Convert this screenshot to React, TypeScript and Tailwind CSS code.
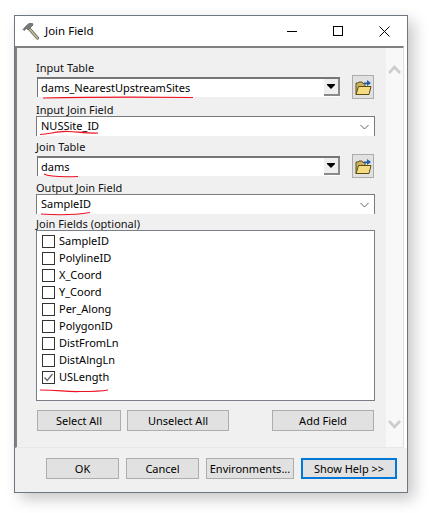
import React from "react";

const font = { fontFamily: '"Noto Sans", sans-serif' };

function Hammer() {
  return (
    <svg width="18" height="18" viewBox="0 0 18 18" className="shrink-0">
      <path d="M7 6.5 L15.5 16" stroke="#6f6a5c" strokeWidth="3.2" strokeLinecap="round" />
      <path d="M7 6.5 L15.5 16" stroke="#c9bfa6" strokeWidth="1.4" strokeLinecap="round" />
      <path d="M1 7.5 L4 4 L7 1.5 L10.5 1.5 L11 3 L9 5 L6 8 L4.5 6.5 L2 8.5 Z" fill="#77797b" stroke="#4a4c4e" strokeWidth="0.6" />
    </svg>
  );
}

function Folder() {
  return (
    <svg width="17" height="17" viewBox="0 0 17 17">
      <path d="M1 15.5 V4 H3 L4 3 H7 L8 4.5 H10 V15.5 Z" fill="#c7b265" stroke="#5f5116" strokeWidth="1" />
      <path d="M1 15.5 L3.5 7.5 H16 L14 15.5 Z" fill="#f4dc85" stroke="#5f4d10" strokeWidth="1" />
      <path d="M8.5 3.5 H12 V1 L16 4 L12 7 V5.2 H10 Z" fill="#1e5fa8" />
    </svg>
  );
}

function BrowseButton() {
  return (
    <div className="w-[22px] h-[24px] flex items-center justify-center bg-[#e1e1e1] border border-[#adadad]">
      <Folder />
    </div>
  );
}

function Combo({ value }: { value: string }) {
  return (
    <div className="flex items-start gap-[12px] pl-[1px]">
      <div className="w-[303px] h-[20px] mt-[2px] bg-white border-t-2 border-l border-[#767676] flex justify-between">
        <span className="pl-[3px] text-[11px] leading-[18px] text-black">{value}</span>
        <div className="w-[16px] h-[17px] bg-[#efefef] border-r-2 border-b-2 border-[#8a8a8a] flex items-center justify-center">
          <svg width="8" height="5" viewBox="0 0 8 5"><path d="M0 0 H8 V1 L4 5 L0 1 Z" fill="#000" /></svg>
        </div>
      </div>
      <BrowseButton />
    </div>
  );
}

function Select({ value }: { value: string }) {
  return (
    <div className="w-[339px] h-[20px] bg-white border-t border-x border-[#7a7a7a] flex items-center justify-between pl-[4px] pr-[5px]">
      <span className="pb-[2px] text-[11px] leading-[18px] text-black">{value}</span>
      <svg width="9" height="6" viewBox="0 0 9 6"><path d="M0.5 1 L4.5 5 L8.5 1" fill="none" stroke="#606060" strokeWidth="1" /></svg>
    </div>
  );
}

function Label({ children }: { children: React.ReactNode }) {
  return <div className="text-[11px] leading-[14px] text-[#111]">{children}</div>;
}

function Check({ label, checked }: { label: string; checked?: boolean }) {
  return (
    <div className="h-[17px] flex items-center gap-[4px]">
      <div className="w-[13px] h-[13px] bg-white border border-[#333] flex items-center justify-center">
        {checked && (
          <svg width="11" height="11" viewBox="0 0 11 11"><path d="M1.5 5.5 L4.2 8.5 L9.5 2" fill="none" stroke="#666" strokeWidth="1.3" /></svg>
        )}
      </div>
      <span className="pb-[2px] text-[11px] leading-[14px] text-black">{label}</span>
    </div>
  );
}

function Btn({ children, className }: { children: React.ReactNode; className: string }) {
  return (
    <button className={`h-[21px] bg-[#e1e1e1] border border-[#adadad] flex items-center justify-center text-[11px] leading-[14px] text-black ${className}`}>
      {children}
    </button>
  );
}

const fields = ["SampleID", "PolylineID", "X_Coord", "Y_Coord", "Per_Along", "PolygonID", "DistFromLn", "DistAlngLn"];

export default function App() {
  return (
    <div className="relative w-[432px] h-[513px] bg-white pl-[14px] pt-[15px] overflow-hidden" style={font}>
      <div className="w-[394px] h-[478px] flex flex-col bg-white border border-[#6d7681] shadow-[6px_6px_14px_rgba(0,0,0,0.22)]">
        <div className="h-[30px] flex items-center shrink-0 pl-[7px]">
          <Hammer />
          <span className="ml-[5px] text-[11.5px] text-black">Join Field</span>
          <div className="ml-auto flex items-center text-black">
            <div className="w-[46px] h-[30px] flex items-center justify-center"><div className="w-[10px] h-px bg-black" /></div>
            <div className="w-[46px] h-[30px] flex items-center justify-center"><div className="w-[10px] h-[10px] border border-black" /></div>
            <div className="w-[46px] h-[30px] flex items-center justify-center">
              <svg width="11" height="11" viewBox="0 0 11 11"><path d="M0.5 0.5 L10.5 10.5 M10.5 0.5 L0.5 10.5" stroke="#000" strokeWidth="1" /></svg>
            </div>
          </div>
        </div>
        <div className="flex-1 flex flex-col min-h-0">
          <div className="h-[402px] flex mr-[3px] border-t-2 border-l-2 border-[#808080] border-r border-r-[#dfdfdf] border-b border-b-[#e8e8e8]">
            <div className="w-[369px] bg-[#f0f0f0] pl-[19px] pt-[13px] flex flex-col">
              <Label>Input Table</Label>
              <Combo value="dams_NearestUpstreamSites" />
              <div className="mt-[4px] h-[13px]"><Label>Input Join Field</Label></div>
              <Select value="NUSSite_ID" />
              <div className="mt-[4px]"><Label>Join Table</Label></div>
              <Combo value="dams" />
              <div className="mt-[3px] h-[13px]"><Label>Output Join Field</Label></div>
              <Select value="SampleID" />
              <div className="mt-[3px] h-[13px]"><Label>Join Fields (optional)</Label></div>
              <div className="w-[339px] h-[171px] bg-white border border-[#7a7f87] pl-[5px] pt-[2px] flex flex-col">
                {fields.map((f) => <Check key={f} label={f} />)}
                <Check label="USLength" checked />
              </div>
              <div className="flex mt-[9px] pl-[1px]">
                <Btn className="w-[84px]">Select All</Btn>
                <Btn className="w-[102px] ml-[6px]">Unselect All</Btn>
                <Btn className="w-[102px] ml-[43px]">Add Field</Btn>
              </div>
            </div>
            <div className="flex-1 bg-[#f8f8f8] flex flex-col items-center justify-between pt-[17px] pb-[18px]">
              <svg width="13" height="9" viewBox="0 0 13 9"><path d="M1 8 L6.5 2 L12 8" fill="none" stroke="#cdcdcd" strokeWidth="2.6" /></svg>
              <svg width="13" height="9" viewBox="0 0 13 9"><path d="M1 1 L6.5 7 L12 1" fill="none" stroke="#cdcdcd" strokeWidth="2.6" /></svg>
            </div>
          </div>
          <div className="flex-1 bg-[#f0f0f0] flex items-start pt-[10px] pl-[31px]">
            <Btn className="w-[73px]">OK</Btn>
            <Btn className="w-[73px] ml-[7px]">Cancel</Btn>
            <Btn className="w-[88px] ml-[7px]">Environments...</Btn>
            <Btn className="w-[96px] ml-[7px] !border-2 !border-[#0078d7]">Show Help &gt;&gt;</Btn>
          </div>
        </div>
      </div>
      <svg className="absolute left-0 top-0 pointer-events-none" width="432" height="513" fill="none" stroke="#ee1122" strokeWidth="1.2">
        <path d="M43 98 C90 97 150 97 193 97.5" />
        <path d="M40 134.5 C50 134 58 131 68 131.5 C78 132 88 133.5 98 133" />
        <path d="M44 174 C50 177 65 177 78 176.5" />
        <path d="M41 214 C55 215 75 215 90 212.5" />
        <path d="M40 390 C60 390 65 392 80 391.5 C90 391.5 100 391.5 108 390" />
      </svg>
    </div>
  );
}
